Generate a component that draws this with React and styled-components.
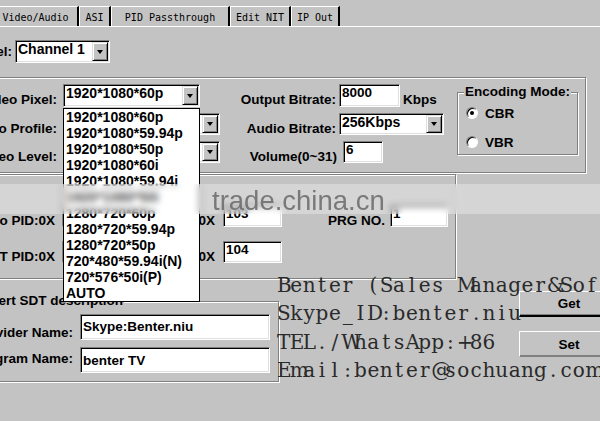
import React from 'react';
import styled, { createGlobalStyle } from 'styled-components';

const GlobalStyle = createGlobalStyle`
  html, body {
    margin: 0;
    padding: 0;
    background: #c3c3c3;
  }
`;

const Window = styled.div`
  position: relative;
  width: 600px;
  height: 421px;
  overflow: hidden;
  background: #c3c3c3;
  font-family: "Liberation Sans", Arial, sans-serif;
  font-size: 13.5px;
  font-weight: bold;
  color: #000;
`;

const TabStrip = styled.div`
  display: flex;
  align-items: flex-end;
  height: 26px;
  border-bottom: 1px solid #fff;
`;

const Tab = styled.div`
  box-sizing: border-box;
  flex: none;
  width: ${p => p.$w}px;
  margin-left: ${p => p.$ml || 0}px;
  height: 20px;
  display: flex;
  align-items: center;
  justify-content: center;
  padding-top: 1px;
  border-top: 1px solid #fff;
  border-left: 1px solid #fff;
  border-right: 2px solid #000;
  font-family: "DejaVu Sans Mono", "Liberation Mono", monospace;
  font-size: 10px;
  font-weight: normal;
  white-space: pre;
`;

const Panel = styled.div`
  margin-left: -80px;
  padding-top: 13px;
  width: 720px;
`;

const ChannelRow = styled.div`
  display: flex;
  margin-left: 10px;
  height: 23px;
`;

const Label = styled.div`
  box-sizing: border-box;
  flex: none;
  width: ${p => (p.$w ? `${p.$w}px` : 'auto')};
  text-align: right;
  white-space: nowrap;
  line-height: 16px;
  padding-right: ${p => p.$pr ?? 6}px;
  padding-top: ${p => p.$pt ?? 8}px;
`;

const Field = styled.div`
  box-sizing: border-box;
  flex: none;
  width: ${p => p.$w}px;
  height: ${p => p.$h || 22}px;
  margin-left: ${p => p.$ml || 0}px;
  background: #fff;
  border: 1px solid;
  border-color: #808080 #fff #fff #808080;
  box-shadow: inset 1px 1px 0 #000, inset -1px -1px 0 #dfdfdf;
  padding: ${p => p.$pt ?? 0}px 2px 0 2px;
  line-height: 16px;
  white-space: nowrap;
  overflow: hidden;
`;

const Select = styled(Field)`
  display: flex;
  justify-content: space-between;
  padding-right: 1px;
  font-size: 14px;
`;

const DropButton = styled.span`
  box-sizing: border-box;
  flex: none;
  width: 16px;
  margin: 1px 0;
  background: #c3c3c3;
  border: 1px solid;
  border-color: #dfdfdf #000 #000 #dfdfdf;
  box-shadow: inset 1px 1px 0 #fff, inset -1px -1px 0 #808080;
  display: flex;
  align-items: center;
  justify-content: center;

  &::after {
    content: '';
    border-left: 3.5px solid transparent;
    border-right: 3.5px solid transparent;
    border-top: 4px solid #000;
  }
`;

const Group = styled.fieldset`
  box-sizing: border-box;
  min-width: 0;
  margin: ${p => p.$mt || 0}px 0 0 10px;
  padding: 0;
  width: ${p => p.$w}px;
  height: ${p => p.$h}px;
  border: 1px solid #808080;
  box-shadow: 1px 1px 0 #fff, inset 1px 1px 0 #fff;
  display: ${p => (p.$row ? 'flex' : 'block')};
  align-items: flex-start;
`;

const Legend = styled.legend`
  margin-left: ${p => p.$ml || 6}px;
  padding: 0 1px;
  line-height: 16px;
  background: #c3c3c3;
  position: relative;
  white-space: nowrap;
`;

const FieldGrid = styled.div`
  display: grid;
  grid-template-columns: ${p => p.$cols};
  grid-template-rows: ${p => p.$rows};
  row-gap: ${p => p.$gap}px;
  margin-top: ${p => p.$mt}px;
  align-items: start;
`;

const Cell = styled.div`
  display: flex;
  align-items: flex-start;
`;

const Unit = styled.span`
  padding: 8px 0 0 3px;
  line-height: 16px;
`;

const EncodingBox = styled(Group)`
  margin: 6px 7px 0 auto;
`;

const RadioList = styled.div`
  display: flex;
  flex-direction: column;
  gap: 13px;
  padding: 5px 0 0 8px;
`;

const RadioRow = styled.div`
  display: flex;
  align-items: center;
  height: 16px;
  gap: 7px;
`;

const RadioDot = styled.span`
  box-sizing: border-box;
  width: 12px;
  height: 12px;
  border-radius: 50%;
  background: #fff;
  border: 1px solid;
  border-color: #808080 #fff #fff #808080;
  box-shadow: inset 1px 1px 0 #000;
  display: flex;
  align-items: center;
  justify-content: center;

  &::after {
    content: '';
    width: 4px;
    height: 4px;
    border-radius: 50%;
    background: ${p => (p.$on ? '#000' : 'transparent')};
  }
`;

const BottomArea = styled.div`
  display: flex;
  align-items: flex-start;
  margin-top: 14px;
`;

const ButtonColumn = styled.div`
  display: flex;
  flex-direction: column;
  gap: 14px;
  margin: -2px 0 0 240px;
`;

const Button = styled.div`
  box-sizing: border-box;
  width: 100px;
  height: 26px;
  display: flex;
  align-items: center;
  justify-content: center;
  background: #c3c3c3;
  border: 1px solid;
  border-color: #fff #000 ${p => (p.$default ? '#000' : '#808080')} #fff;
  border-bottom-width: ${p => (p.$default ? 2 : 1)}px;
  box-shadow: inset -1px -1px 0 #808080;
`;

const DropList = styled.div`
  position: absolute;
  left: 63px;
  top: 108px;
  width: 137px;
  box-sizing: border-box;
  background: #fff;
  border: 1px solid #000;
  font-size: 14px;
  z-index: 2;
`;

const DropItem = styled.div`
  height: 16px;
  line-height: 16px;
  padding-left: 2px;
  white-space: nowrap;
`;

const Band = styled.div`
  position: absolute;
  left: 0;
  top: 184px;
  width: 600px;
  height: 30px;
  background: rgba(255, 255, 255, 0.3);
  backdrop-filter: blur(3px);
  z-index: 3;
  box-sizing: border-box;
  padding: 2px 0 0 212px;
  font-family: "Liberation Sans", Arial, sans-serif;
  font-weight: normal;
  font-size: 27.5px;
  line-height: 30px;
  color: rgba(105, 105, 105, 0.85);
`;

const Contact = styled.div`
  position: absolute;
  left: 277px;
  top: 271px;
  z-index: 4;
  font-family: "DejaVu Serif", "Liberation Serif", serif;
  font-weight: normal;
  font-size: 20px;
  color: #2a2a2a;
`;

const ContactLine = styled.div`
  height: 28.3px;
  line-height: 28px;
  white-space: nowrap;
`;

const Glyph = styled.span`
  display: inline-block;
  width: 12.85px;
  text-align: center;
`;

const resolutions = [
  '1920*1080*60p',
  '1920*1080*59.94p',
  '1920*1080*50p',
  '1920*1080*60i',
  '1920*1080*59.94i',
  '1920*1080*50i',
  '1280*720*60p',
  '1280*720*59.94p',
  '1280*720*50p',
  '720*480*59.94i(N)',
  '720*576*50i(P)',
  'AUTO',
];

const contactLines = [
  'Benter (Sales Manager&Software)',
  'Skype_ID:benter.niu',
  'TEL./WhatsApp:+86',
  'Email:benter@sochuang.com',
];

const tabs = [
  { name: 'Video/Audio', w: 86, ml: -7 },
  { name: 'ASI', w: 32 },
  { name: 'PID Passthrough', w: 119 },
  { name: 'Edit NIT', w: 61 },
  { name: 'IP Out', w: 49 },
];

const SelectBox = ({ w, h, children }) => (
  <Select $w={w} $h={h}>
    <span>{children}</span>
    <DropButton />
  </Select>
);

export default function App() {
  return (
    <Window>
      <GlobalStyle />
      <TabStrip>
        {tabs.map(t => (
          <Tab key={t.name} $w={t.w} $ml={t.ml}>{t.name}</Tab>
        ))}
      </TabStrip>

      <Panel>
        <ChannelRow>
          <Label $w={85} $pr={3} $pt={4}>Channel:</Label>
          <SelectBox w={95} h={23}>Channel 1</SelectBox>
        </ChannelRow>

        <Group $mt={14} $w={656} $h={96} $row>
          <FieldGrid $cols="132px 157px 119px auto" $rows="23px 22px 22px" $gap={6} $mt={6}>
            <Label>Video Pixel:</Label>
            <Cell><SelectBox w={137} h={23}>1920*1080*60p</SelectBox></Cell>
            <Label $pr={3}>Output Bitrate:</Label>
            <Cell>
              <Field $w={61} $h={23}>8000</Field>
              <Unit>Kbps</Unit>
            </Cell>

            <Label>Video Profile:</Label>
            <Cell><SelectBox w={157}>High</SelectBox></Cell>
            <Label $pr={3}>Audio Bitrate:</Label>
            <Cell><SelectBox w={105}>256Kbps</SelectBox></Cell>

            <Label>Video Level:</Label>
            <Cell><SelectBox w={157}>4.1</SelectBox></Cell>
            <Label $pr={2}>Volume(0~31)</Label>
            <Cell><Field $w={40} $ml={4}>6</Field></Cell>
          </FieldGrid>

          <EncodingBox $w={121} $h={71}>
            <Legend $ml={6}>Encoding Mode:</Legend>
            <RadioList>
              <RadioRow><RadioDot $on />CBR</RadioRow>
              <RadioRow><RadioDot />VBR</RadioRow>
            </RadioList>
          </EncodingBox>
        </Group>

        <Group $mt={1} $w={526} $h={105}>
          <FieldGrid $cols="131px 60px 101px 59px 108px 58px" $rows="22px 22px" $gap={14} $mt={30}>
            <Label $pr={7}>Video PID:0X</Label>
            <Field $w={60}>100</Field>
            <Label $pr={8}>Audio PID:0X</Label>
            <Field $w={59}>103</Field>
            <Label $pr={5}>PRG NO.</Label>
            <Field $w={58}>1</Field>

            <Label $pr={7}>PMT PID:0X</Label>
            <Field $w={60}>102</Field>
            <Label $pr={8}>PCR PID:0X</Label>
            <Field $w={59}>104</Field>
          </FieldGrid>
        </Group>

        <BottomArea>
          <Group $w={349} $h={89}>
            <Legend $ml={47}>Insert SDT description</Legend>
            <FieldGrid $cols="149px 190px" $rows="26px 26px" $gap={7} $mt={5}>
              <Label $pr={7} $pt={11}>Provider Name:</Label>
              <Field $w={190} $h={26} $pt={4}>Skype:Benter.niu</Field>
              <Label $pr={7} $pt={4}>Program Name:</Label>
              <Field $w={190} $h={26} $pt={5}>benter TV</Field>
            </FieldGrid>
          </Group>

          <ButtonColumn>
            <Button $default>Get</Button>
            <Button>Set</Button>
          </ButtonColumn>
        </BottomArea>
      </Panel>

      <DropList>
        {resolutions.map(r => (
          <DropItem key={r}>{r}</DropItem>
        ))}
      </DropList>

      <Band>trade.china.cn</Band>

      <Contact>
        {contactLines.map(line => (
          <ContactLine key={line}>
            {line.split('').map((ch, i) => (
              <Glyph key={i}>{ch}</Glyph>
            ))}
          </ContactLine>
        ))}
      </Contact>
    </Window>
  );
}
